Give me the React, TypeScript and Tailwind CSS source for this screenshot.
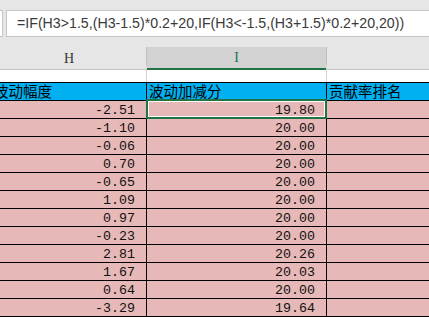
const hVals = ['-2.51', '-1.10', '-0.06', '0.70', '-0.65', '1.09', '0.97', '-0.23', '2.81', '1.67', '0.64', '-3.29']
const iVals = ['19.80', '20.00', '20.00', '20.00', '20.00', '20.00', '20.00', '20.00', '20.26', '20.03', '20.00', '19.64']

const cjk = "font-['Noto_Sans_CJK_SC',sans-serif]"
const mono = "font-['Liberation_Mono',monospace]"

export default function App() {
  return (
    <div className="w-[429px] h-[317px] overflow-hidden bg-[#e6e6e6]">
      {/* formula bar */}
      <div className="h-[47px] pt-[10px] flex gap-[3px]">
        <div className="w-[3px] h-[27px] bg-white border-r border-y border-[#c6c6c6]" />
        <div className="flex-1 h-[27px] bg-white border border-[#c6c6c6] border-r-0 pl-[10px] flex items-center whitespace-nowrap overflow-hidden">
          <span className="font-['Liberation_Sans',sans-serif] text-[14.2px] text-[#3a3a3a] leading-none">
            =IF(H3&gt;1.5,(H3-1.5)*0.2+20,IF(H3&lt;-1.5,(H3+1.5)*0.2+20,20))
          </span>
        </div>
      </div>

      <div className="w-[437px] -ml-[8px]">
        {/* column headers */}
        <div className="grid grid-cols-[155px_180px_102px] h-[18px]">
          <div className="bg-[#e6e6e6] border-r border-b border-[#c0c0c0] flex items-center justify-center font-['Liberation_Serif',serif] text-[14px] text-[#333]">H</div>
          <div className="bg-[#d2d2d2] border-r border-[#c0c0c0] border-b-2 border-b-[#217346] flex items-center justify-center font-['Liberation_Serif',serif] text-[14px] text-[#217346]">I</div>
          <div className="bg-[#e6e6e6] border-b border-[#c0c0c0]" />
        </div>

        {/* empty row */}
        <div className="grid grid-cols-[155px_180px_102px] h-[17px] bg-white">
          <div className="border-r border-[#d4d4d4]" />
          <div className="border-r border-[#d4d4d4]" />
          <div />
        </div>

        {/* table header */}
        <div className={`grid grid-cols-[155px_180px_102px] h-[19px] bg-[#00b0f0] border-y border-black text-black text-[14.5px] leading-none ${cjk}`}>
          <div className="border-r border-black pl-[2px] flex items-center">波动幅度</div>
          <div className="border-r border-black pl-[2px] flex items-center">波动加减分</div>
          <div className="pl-[2px] flex items-center">贡献率排名</div>
        </div>

        {hVals.map((h, i) => (
          <div key={i} className={`grid grid-cols-[155px_180px_102px] h-[18px] bg-[#e6b8b7] border-b border-black text-[#111] text-[13.3px] leading-[15px] ${mono}`}>
            <div className="border-r border-black pr-[11px] flex items-end justify-end">{h}</div>
            <div className="relative border-r border-black pr-[11px] flex items-end justify-end">
              {iVals[i]}
              {i === 0 && (
                <div className="absolute -left-[1px] -top-[2px] right-[-1px] bottom-[-1px] border-2 border-[#217346] shadow-[inset_0_0_0_1px_white]" />
              )}
            </div>
            <div />
          </div>
        ))}
      </div>
    </div>
  )
}
